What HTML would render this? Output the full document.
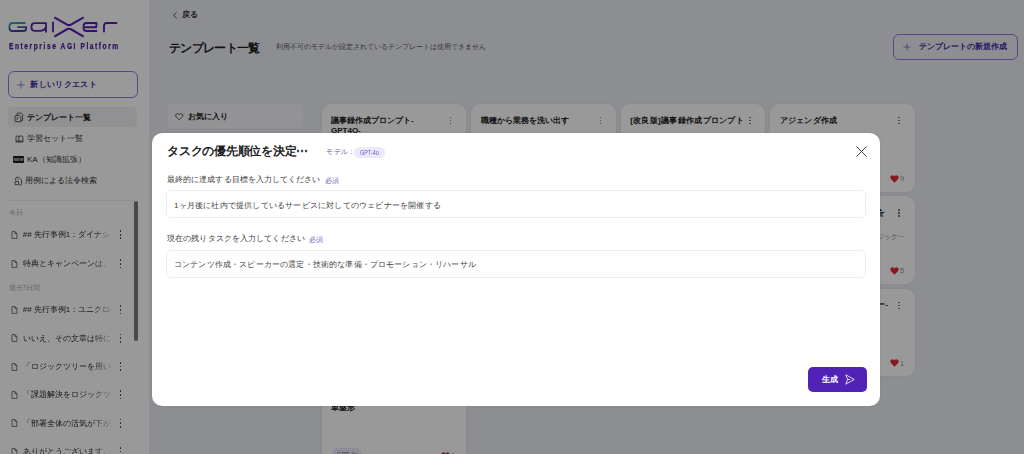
<!DOCTYPE html>
<html><head><meta charset="utf-8">
<style>
*{box-sizing:border-box;margin:0;padding:0}
html,body{width:1024px;height:454px;overflow:hidden}
body{position:relative;font-family:"Liberation Sans",sans-serif;background:#ebedf3;color:#222}
.a{position:absolute;white-space:nowrap}
.t{line-height:1}
#side{position:absolute;left:0;top:0;width:149px;height:454px;background:#fff;overflow:hidden}
#main{position:absolute;left:150px;top:0;width:874px;height:454px;background:#ebedf3}
#ov{position:absolute;left:0;top:0;width:1024px;height:454px;background:rgba(0,0,0,0.4)}
#modal{position:absolute;left:152.3px;top:132.8px;width:728.2px;height:273.6px;background:#fff;border-radius:10px;box-shadow:0 0 3px rgba(0,0,0,0.08)}
.card{position:absolute;width:144.6px;height:87.6px;background:#fff;border-radius:9px;box-shadow:0 0 3px rgba(0,0,0,0.07)}
.ct{position:absolute;left:9.5px;font-size:8px;font-weight:bold;line-height:10px;color:#222;white-space:nowrap}
.dots{position:absolute;width:2px;margin-top:0.4px}
.dots i{display:block;width:1.4px;height:1.4px;border-radius:50%;background:#666;margin-bottom:1.6px}
.hist{position:absolute;left:0;width:134px;height:20px}
.hist .tx{position:absolute;left:22.7px;font-size:8px;line-height:10px;top:5.8px;color:#2a2a2a;width:88px;overflow:hidden;white-space:nowrap;-webkit-mask-image:linear-gradient(90deg,#000 78%,rgba(0,0,0,0.25) 100%)}
.hist svg{position:absolute;left:11px;top:6.5px}
.hist .dots{left:119.6px;top:5.5px}
.hist .dots i{width:1.8px;height:1.8px;margin-bottom:1.85px;background:#333}
</style></head><body>
<div id="side">
  <svg class="a" style="left:0;top:0" width="150" height="56" viewBox="0 0 150 56">
    <defs><linearGradient id="gg" x1="0" y1="0" x2="0.35" y2="1"><stop offset="0" stop-color="#3fae9e"/><stop offset="1" stop-color="#3a3fa8"/></linearGradient></defs>
    <g fill="none" stroke-width="1.85" stroke-linecap="round">
      <path d="M24.8 23 H12.6 Q9.4 23 9.4 26.3 V27.7 Q9.4 31 12.6 31 H23 Q26.2 31 26.2 28.4 V27.1 H18" stroke="url(#gg)"/>
      <path d="M46 23.1 H34.8 Q31.5 23.1 31.5 26.3 V27.7 Q31.5 30.9 34.8 30.9 H40.5 Q44 30.9 46 27.6 M46 23.1 V31.8" stroke="#5a1fb0"/>
      <path d="M53 22.5 V31.5" stroke="#5a1fb0"/>
      <path d="M54.3 17.3 L66.6 24.4 Q69 25.8 71.4 24.4 L83.7 17.3" stroke="#5a1fb0" stroke-linecap="butt" stroke-width="2.1"/>
      <path d="M54.3 36.7 L66.6 29.5 Q69 28.1 71.4 29.5 L83.7 36.7" stroke="#5a1fb0" stroke-linecap="butt" stroke-width="2.1"/>
      <path d="M96.5 23 H86.5 Q83.6 23 83.6 26 V28.2 Q83.6 31 86.5 31 H96.5 M84 27.2 H96.2 Q96.5 25 96.5 23" stroke="#5a1fb0"/>
      <path d="M104 31.5 V26 Q104 23 107 23 H116.5" stroke="#5a1fb0"/>
    </g>
  </svg>
  <div class="a t" style="left:8.6px;top:42.2px;font-size:8.5px;font-weight:bold;color:#4a1a9a;letter-spacing:2px;transform:scaleX(0.78);-webkit-text-stroke:0.25px #4a1a9a;transform-origin:0 0">Enterprise AGI Platform</div>

  <div class="a" style="left:8px;top:71px;width:129.6px;height:26.5px;border:1px solid #9078e6;border-radius:6px"></div>
  <svg class="a" style="left:17px;top:80.7px" width="8" height="8" viewBox="0 0 8 8"><path d="M4 0.3V7.7M0.3 4H7.7" stroke="#7763c4" stroke-width="0.8"/></svg>
  <div class="a t" style="left:30.4px;top:81px;font-size:8px;font-weight:bold;color:#4329a8;letter-spacing:0.31px">新しいリクエスト</div>

  <div class="a" style="left:8.2px;top:107.4px;width:129.2px;height:20.1px;background:#f2f2f7;border-radius:4px"></div>
  <svg class="a" style="left:14.4px;top:112.4px" width="10" height="11" viewBox="0 0 10 11"><g fill="none" stroke="#2a2a2a" stroke-width="0.75" stroke-linejoin="round"><path d="M3.1 3.3V1.7Q3.1 1.1 3.7 1.1H7.3L8.6 2.4V8.1Q8.6 8.6 8.1 8.6H6.9"/><path d="M1.7 3.5H5.6L6.9 4.8V9.1Q6.9 9.7 6.3 9.7H1.7Q1.1 9.7 1.1 9.1V4.1Q1.1 3.5 1.7 3.5Z"/><path d="M3 5.6H4.8M3 5.6V8.2" stroke-width="0.6"/></g></svg>
  <div class="a t" style="left:26.9px;top:113.6px;font-size:8px;font-weight:bold;color:#222">テンプレート一覧</div>

  <svg class="a" style="left:14.5px;top:134.5px" width="9" height="8" viewBox="0 0 9 8"><g fill="none" stroke="#333" stroke-width="0.8" stroke-linejoin="round"><path d="M1 7V2.1Q1 1 2.2 1H2.8Q3.9 1 3.9 2.1V7 M3.9 2.1Q3.9 1 5 1H6.7Q7.9 1 7.9 2.1V7 M1 6.1H7.9 M1 7H7.9"/></g></svg>
  <div class="a t" style="left:26.9px;top:134.5px;font-size:8px;color:#2e2e2e">学習セット一覧</div>

  <div class="a" style="left:13.1px;top:155.9px;width:10.8px;height:6.8px;background:#1a1a1a;border-radius:1px"></div>
  <div class="a t" style="left:13.1px;top:157.7px;width:10.8px;text-align:center;font-size:4.2px;font-weight:bold;color:#ddd">NEW</div>
  <div class="a t" style="left:26.9px;top:156px;font-size:8px;color:#2e2e2e">KA（知識拡張）</div>

  <svg class="a" style="left:13.5px;top:176px" width="9" height="10" viewBox="0 0 9 10"><g fill="none" stroke="#333" stroke-width="0.75" stroke-linejoin="round"><path d="M1.3 4.3Q1.3 1 3.4 1Q5 1 5.6 2.3L7.6 4V8.2Q7.6 9 6.8 9H5.2"/><path d="M1 5.5H4.6V8.6H1Z"/><path d="M3.2 2.5L4.4 3.8"/></g></svg>
  <div class="a t" style="left:24.8px;top:176.6px;font-size:8px;color:#2e2e2e">用例による法令検索</div>

  <div class="a" style="left:8.8px;top:200px;width:125.2px;height:1px;background:#ededed"></div>
  <div class="a" style="left:134.2px;top:201px;width:3.4px;height:139.5px;background:#7a7a7a;border-radius:2px"></div>

  <div class="a t" style="left:8.5px;top:210px;font-size:6.5px;color:#aaa">今日</div>
  <div class="hist" style="top:224.2px"><svg width="7" height="8" viewBox="0 0 7 8"><path d="M1 0.6H4L5.9 2.5V7.4H1Z M4 0.6V2.5H5.9" fill="none" stroke="#444" stroke-width="0.7" stroke-linejoin="round"/></svg><div class="tx">## 先行事例1：ダイナシック</div><div class="dots"><i></i><i></i><i></i></div></div>
  <div class="hist" style="top:253.5px"><svg width="7" height="8" viewBox="0 0 7 8"><path d="M1 0.6H4L5.9 2.5V7.4H1Z M4 0.6V2.5H5.9" fill="none" stroke="#444" stroke-width="0.7" stroke-linejoin="round"/></svg><div class="tx">特典とキャンペーンは、</div><div class="dots"><i></i><i></i><i></i></div></div>
  <div class="a t" style="left:8.5px;top:284.7px;font-size:6.5px;color:#aaa">過去7日間</div>
  <div class="hist" style="top:299.4px"><svg width="7" height="8" viewBox="0 0 7 8"><path d="M1 0.6H4L5.9 2.5V7.4H1Z M4 0.6V2.5H5.9" fill="none" stroke="#444" stroke-width="0.7" stroke-linejoin="round"/></svg><div class="tx">## 先行事例1：ユニクロの</div><div class="dots"><i></i><i></i><i></i></div></div>
  <div class="hist" style="top:327.8px"><svg width="7" height="8" viewBox="0 0 7 8"><path d="M1 0.6H4L5.9 2.5V7.4H1Z M4 0.6V2.5H5.9" fill="none" stroke="#444" stroke-width="0.7" stroke-linejoin="round"/></svg><div class="tx">いいえ、その文章は特に</div><div class="dots"><i></i><i></i><i></i></div></div>
  <div class="hist" style="top:356.1px"><svg width="7" height="8" viewBox="0 0 7 8"><path d="M1 0.6H4L5.9 2.5V7.4H1Z M4 0.6V2.5H5.9" fill="none" stroke="#444" stroke-width="0.7" stroke-linejoin="round"/></svg><div class="tx">「ロジックツリーを用いて</div><div class="dots"><i></i><i></i><i></i></div></div>
  <div class="hist" style="top:384.5px"><svg width="7" height="8" viewBox="0 0 7 8"><path d="M1 0.6H4L5.9 2.5V7.4H1Z M4 0.6V2.5H5.9" fill="none" stroke="#444" stroke-width="0.7" stroke-linejoin="round"/></svg><div class="tx">「課題解決をロジックツリー</div><div class="dots"><i></i><i></i><i></i></div></div>
  <div class="hist" style="top:412.8px"><svg width="7" height="8" viewBox="0 0 7 8"><path d="M1 0.6H4L5.9 2.5V7.4H1Z M4 0.6V2.5H5.9" fill="none" stroke="#444" stroke-width="0.7" stroke-linejoin="round"/></svg><div class="tx">「部署全体の活気が下がって</div><div class="dots"><i></i><i></i><i></i></div></div>
  <div class="hist" style="top:441.1px"><svg width="7" height="8" viewBox="0 0 7 8"><path d="M1 0.6H4L5.9 2.5V7.4H1Z M4 0.6V2.5H5.9" fill="none" stroke="#444" stroke-width="0.7" stroke-linejoin="round"/></svg><div class="tx">ありがとうございます。</div><div class="dots"><i></i><i></i><i></i></div></div>
</div>

<div id="main">
  <svg class="a" style="left:22.8px;top:11.6px" width="5" height="7" viewBox="0 0 5 7"><path d="M3.6 0.5L0.6 3.3L3.6 6.1" fill="none" stroke="#383838" stroke-width="0.85"/></svg>
  <div class="a t" style="left:32.2px;top:11px;font-size:7.7px;font-weight:bold;color:#333">戻る</div>
  <div class="a t" style="left:18.9px;top:41.5px;font-size:12px;letter-spacing:-0.67px;font-weight:bold;color:#1f1f1f">テンプレート一覧</div>
  <div class="a t" style="left:125.6px;top:43.2px;font-size:7px;letter-spacing:0px;color:#555">利用不可のモデルが設定されているテンプレートは使用できません</div>

  <div class="a" style="left:743px;top:34px;width:124.8px;height:25.6px;border:1px solid #9078e6;border-radius:6px"></div>
  <svg class="a" style="left:752.5px;top:43px" width="8" height="8" viewBox="0 0 8 8"><path d="M4 0.5V7.5M0.5 4H7.5" stroke="#7763c4" stroke-width="0.8"/></svg>
  <div class="a t" style="left:769px;top:43px;font-size:8.15px;font-weight:bold;color:#4329a8">テンプレートの新規作成</div>

  <div class="a" style="left:18.1px;top:103.8px;width:135.3px;height:23.8px;background:#f6f6fa;border-radius:4px"></div>
  <svg class="a" style="left:25.4px;top:112.6px" width="9" height="8" viewBox="0 0 9 8"><path d="M4.3 6.8L1.3 3.9Q0.5 3.1 0.7 2Q1 0.8 2.3 0.7Q3.4 0.7 4.3 1.7Q5.2 0.7 6.3 0.7Q7.6 0.8 7.9 2Q8.1 3.1 7.3 3.9Z" fill="none" stroke="#333" stroke-width="0.75" stroke-linejoin="round"/></svg>
  <div class="a t" style="left:37.8px;top:113.2px;font-size:7.9px;font-weight:bold;color:#222">お気に入り</div>

  <!-- cards -->
  <div class="card" style="left:171.5px;top:104.2px">
    <div class="ct" style="top:11.5px">議事録作成プロンプト-<br>GPT4O-</div>
    <div class="dots" style="left:128.5px;top:12.5px"><i></i><i></i><i></i></div>
  </div>
  <div class="card" style="left:321.1px;top:104.2px">
    <div class="ct" style="top:11.5px">職種から業務を洗い出す</div>
    <div class="dots" style="left:128.5px;top:12.5px"><i></i><i></i><i></i></div>
  </div>
  <div class="card" style="left:470.7px;top:104.2px">
    <div class="ct" style="top:11.5px;letter-spacing:0.3px">[改良版]議事録作成プロンプト</div>
    <div class="dots" style="left:128.5px;top:12.5px"><i></i><i></i><i></i></div>
  </div>
  <div class="card" style="left:620.3px;top:104.2px">
    <div class="ct" style="top:11.5px;letter-spacing:0.22px">アジェンダ作成</div>
    <div class="dots" style="left:128px;top:12.5px"><i></i><i></i><i></i></div>
    <svg class="a" style="left:119.7px;top:70.6px" width="9" height="8" viewBox="0 0 9 8"><path d="M4.5 7.8L1.1 4.3Q0 3 0.4 1.8Q0.9 0.3 2.5 0.3Q3.7 0.3 4.5 1.4Q5.3 0.3 6.5 0.3Q8.1 0.3 8.6 1.8Q9 3 7.9 4.3Z" fill="#e0283a"/></svg>
    <div class="a t" style="left:129.8px;top:70.8px;font-size:7.5px;color:#9a9a9a">9</div>
  </div>
  <div class="card" style="left:620.3px;top:196.4px">
    <div class="ct" style="top:11.5px;left:auto;right:30px">課題解決をロジックツリーを</div>
    <div class="a t" style="right:10px;top:36.2px;font-size:7px;color:#888">ロジック⋯</div>
    <div class="dots" style="left:128px;top:12.5px"><i></i><i></i><i></i></div>
    <svg class="a" style="left:119.7px;top:70.6px" width="9" height="8" viewBox="0 0 9 8"><path d="M4.5 7.8L1.1 4.3Q0 3 0.4 1.8Q0.9 0.3 2.5 0.3Q3.7 0.3 4.5 1.4Q5.3 0.3 6.5 0.3Q8.1 0.3 8.6 1.8Q9 3 7.9 4.3Z" fill="#e0283a"/></svg>
    <div class="a t" style="left:129.8px;top:70.8px;font-size:7.5px;color:#9a9a9a">5</div>
  </div>
  <div class="card" style="left:620.3px;top:288.8px">
    <div class="ct" style="top:11.5px;left:auto;right:27px">ロジックツリー-</div>
    <div class="dots" style="left:128px;top:12.5px"><i></i><i></i><i></i></div>
    <svg class="a" style="left:119.7px;top:70.6px" width="9" height="8" viewBox="0 0 9 8"><path d="M4.5 7.8L1.1 4.3Q0 3 0.4 1.8Q0.9 0.3 2.5 0.3Q3.7 0.3 4.5 1.4Q5.3 0.3 6.5 0.3Q8.1 0.3 8.6 1.8Q9 3 7.9 4.3Z" fill="#e0283a"/></svg>
    <div class="a t" style="left:129.8px;top:70.8px;font-size:7.5px;color:#9a9a9a">1</div>
  </div>
  <div class="card" style="left:171.5px;top:381.2px">
    <div class="ct" style="top:11.5px">議事録作成プロンプト-<br>単盤形</div>
    <div class="a" style="left:10.4px;top:67.2px;width:30px;height:12px;background:#ede9fe;border-radius:6px"></div><div class="a t" style="left:15.5px;top:70.2px;font-size:6px;color:#6d5bb8">GPT-4o</div>
    <svg class="a" style="left:119.7px;top:70.6px" width="9" height="8" viewBox="0 0 9 8"><path d="M4.5 7.8L1.1 4.3Q0 3 0.4 1.8Q0.9 0.3 2.5 0.3Q3.7 0.3 4.5 1.4Q5.3 0.3 6.5 0.3Q8.1 0.3 8.6 1.8Q9 3 7.9 4.3Z" fill="#e0283a"/></svg>
    <div class="a t" style="left:129.8px;top:70.8px;font-size:7.5px;color:#9a9a9a">1</div>
  </div>
</div>

<div id="ov"></div>

<div id="modal">
  <div class="a t" style="left:14.7px;top:12.3px;font-size:12px;letter-spacing:-0.23px;font-weight:bold;color:#1f1f1f">タスクの優先順位を決定⋯</div>
  <div class="a t" style="left:174.1px;top:15.4px;font-size:7px;letter-spacing:0.2px;color:#6d5bb8">モデル：</div>
  <div class="a" style="left:202.2px;top:14.2px;width:30.5px;height:11px;background:#ede8fb;border-radius:6px"></div>
  <div class="a t" style="left:207.7px;top:16.0px;font-size:7.5px;color:#6d5bb8;transform-origin:0 0;transform:scaleX(0.73)">GPT-4o</div>
  <svg class="a" style="left:703.7px;top:13.2px" width="11" height="11" viewBox="0 0 11 11"><path d="M0.5 0.5L10.5 10.5M10.5 0.5L0.5 10.5" stroke="#444" stroke-width="1"/></svg>

  <div class="a t" style="left:14.7px;top:43.4px;font-size:8px;letter-spacing:0.08px;color:#3a3a3a">最終的に達成する目標を入力してください</div>
  <div class="a t" style="left:172.7px;top:43.8px;font-size:7px;color:#6d5bb8">必須</div>
  <div class="a" style="left:14.1px;top:57.2px;width:700px;height:28.1px;border:1px solid #ededed;border-radius:5px"></div>
  <div class="a t" style="left:21.7px;top:68.9px;font-size:8px;letter-spacing:0.2px;color:#444">1ヶ月後に社内で提供しているサービスに対してのウェビナーを開催する</div>

  <div class="a t" style="left:14.7px;top:102.2px;font-size:8px;letter-spacing:0.11px;color:#3a3a3a">現在の残りタスクを入力してください</div>
  <div class="a t" style="left:157.1px;top:103.2px;font-size:7px;color:#6d5bb8">必須</div>
  <div class="a" style="left:14.1px;top:116.8px;width:700px;height:28.2px;border:1px solid #ededed;border-radius:5px"></div>
  <div class="a t" style="left:21.7px;top:128.5px;font-size:8px;letter-spacing:0.16px;color:#444">コンテンツ作成・スピーカーの選定・技術的な準備・プロモーション・リハーサル</div>

  <div class="a" style="left:655.9px;top:234.1px;width:58.4px;height:25.4px;background:#5222b6;border-radius:5px"></div>
  <div class="a t" style="left:669.7px;top:242.9px;font-size:8px;font-weight:bold;color:#fff">生成</div>
  <svg class="a" style="left:693.2px;top:241.2px" width="10" height="11" viewBox="0 0 10 11"><path d="M0.8 0.8L9.2 5.5L0.8 10.2L2.6 5.5Z M2.6 5.5H5" fill="none" stroke="#fff" stroke-width="0.8" stroke-linejoin="round"/></svg>
</div>
</body></html>
